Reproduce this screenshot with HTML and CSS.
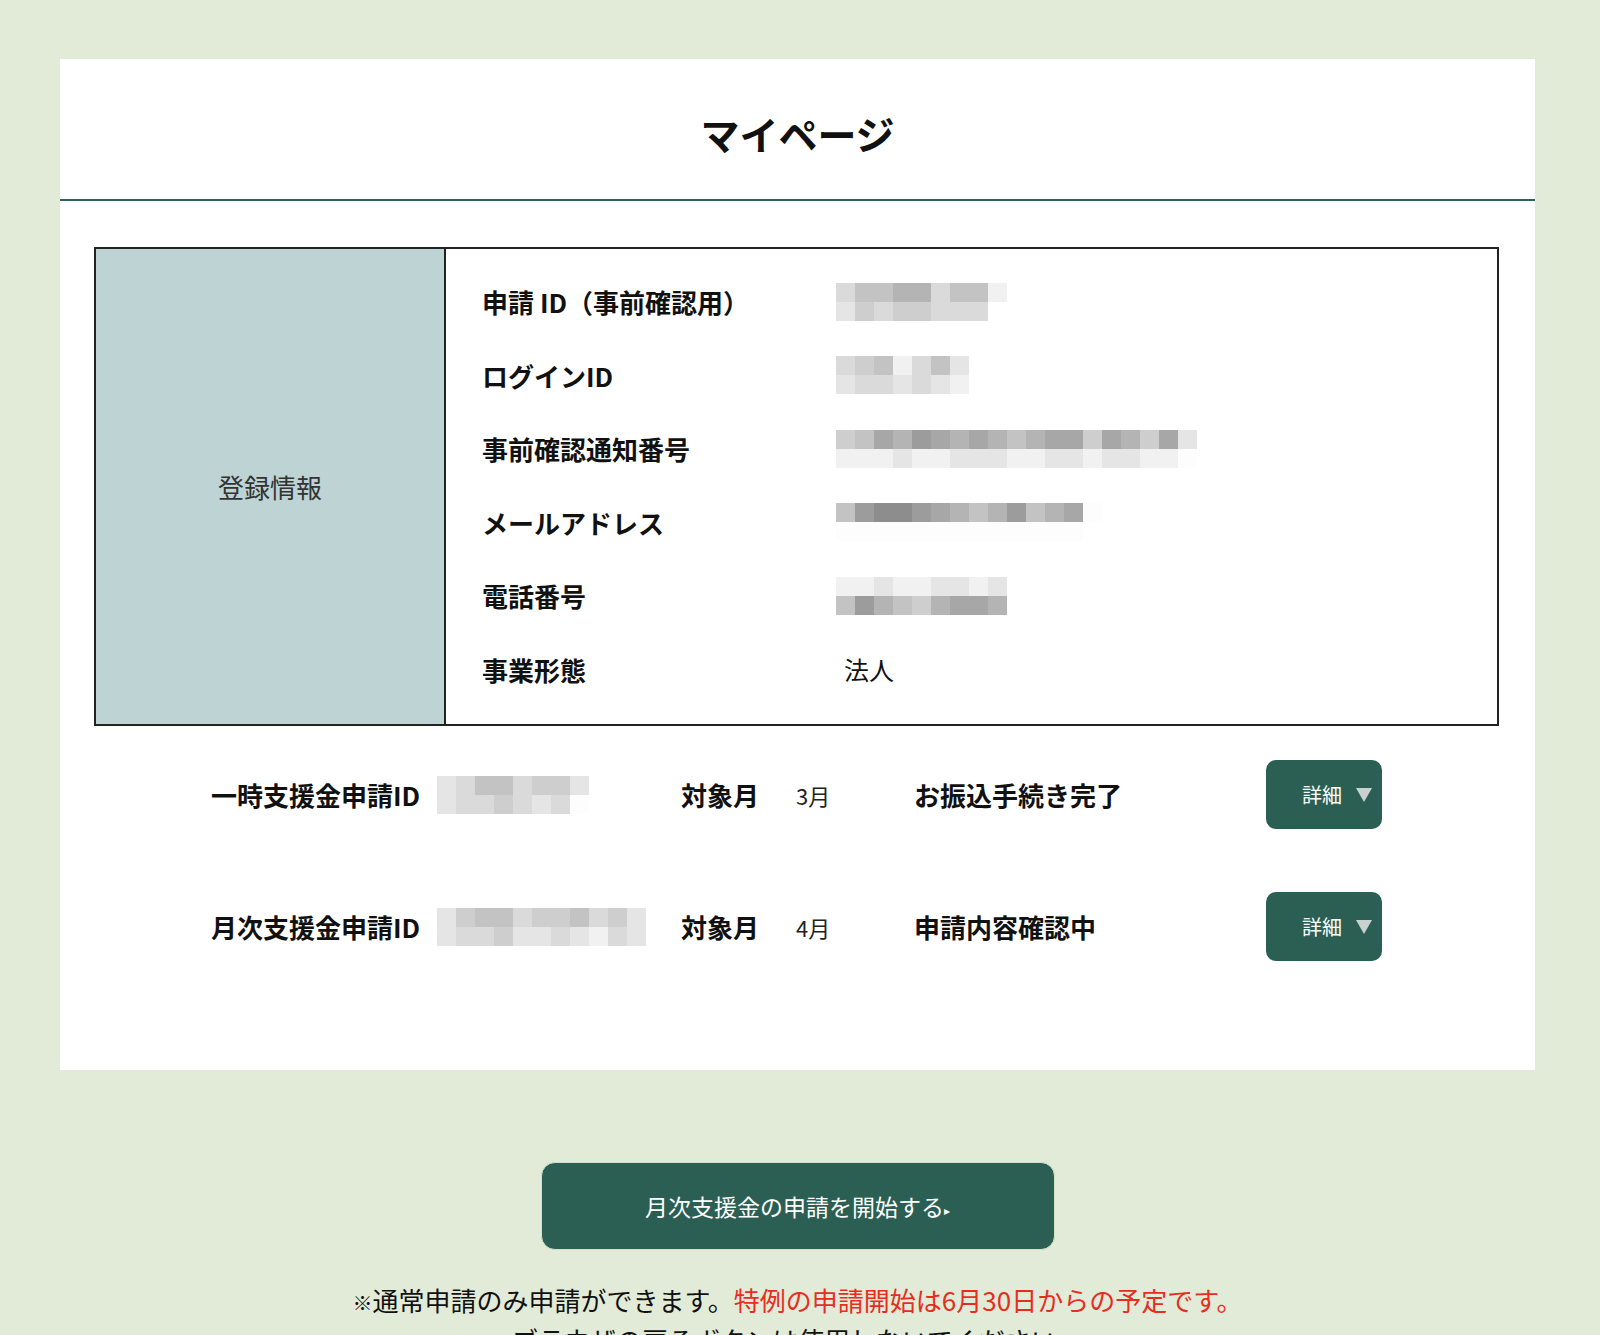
FILE: index.html
```html
<!DOCTYPE html>
<html lang="ja">
<head>
    <meta charset="UTF-8">
    <meta name="viewport" content="width=device-width, initial-scale=1.0">
    <title>マイページ</title>
    <link rel="stylesheet" href="styles.css">
</head>
<body>
    <div class="page">
        <div class="card">
            <div class="card-head">
                <h1>マイページ</h1>
            </div>
            <div class="card-body">
                <div class="info">
                    <div class="info-title">登録情報</div>
                    <dl class="info-list">
                        <div class="info-row">
                            <dt>申請 ID（事前確認用）</dt>
                            <dd>
                                <div class="mosaic">
                                    <div><span class="s3"></span><span class="s5"></span><span class="s5"></span><span class="s6"></span><span class="s6"></span><span class="s3"></span><span class="s5"></span><span class="s5"></span><span class="s1"></span></div>
                                    <div><span class="s2"></span><span class="s4"></span><span class="s3"></span><span class="s4"></span><span class="s4"></span><span class="s3"></span><span class="s3"></span><span class="s3"></span></div>
                                </div>
                            </dd>
                        </div>
                        <div class="info-row">
                            <dt>ログインID</dt>
                            <dd>
                                <div class="mosaic">
                                    <div><span class="s3"></span><span class="s4"></span><span class="s5"></span><span class="s1"></span><span class="s3"></span><span class="s5"></span><span class="s2"></span></div>
                                    <div><span class="s2"></span><span class="s3"></span><span class="s3"></span><span class="s2"></span><span class="s3"></span><span class="s2"></span><span class="s1"></span></div>
                                </div>
                            </dd>
                        </div>
                        <div class="info-row">
                            <dt>事前確認通知番号</dt>
                            <dd>
                                <div class="mosaic">
                                    <div><span class="s4"></span><span class="s5"></span><span class="s7"></span><span class="s6"></span><span class="s8"></span><span class="s7"></span><span class="s6"></span><span class="s7"></span><span class="s6"></span><span class="s5"></span><span class="s6"></span><span class="s7"></span><span class="s7"></span><span class="s4"></span><span class="s7"></span><span class="s6"></span><span class="s4"></span><span class="s7"></span><span class="s2"></span></div>
                                    <div><span class="s1"></span><span class="s1"></span><span class="s1"></span><span class="s2"></span><span class="s1"></span><span class="s1"></span><span class="s2"></span><span class="s2"></span><span class="s2"></span><span class="s1"></span><span class="s1"></span><span class="s2"></span><span class="s2"></span><span class="s1"></span><span class="s2"></span><span class="s2"></span><span class="s1"></span><span class="s1"></span><span class="s0"></span></div>
                                </div>
                            </dd>
                        </div>
                        <div class="info-row">
                            <dt>メールアドレス</dt>
                            <dd>
                                <div class="mosaic">
                                    <div><span class="s5"></span><span class="s8"></span><span class="s9"></span><span class="s9"></span><span class="s8"></span><span class="s7"></span><span class="s6"></span><span class="s5"></span><span class="s6"></span><span class="s8"></span><span class="s5"></span><span class="s6"></span><span class="s7"></span><span class="s0"></span></div>
                                    <div><span class="s0"></span><span class="s0"></span><span class="s0"></span><span class="s0"></span><span class="s0"></span><span class="s0"></span><span class="s0"></span><span class="s0"></span><span class="s0"></span><span class="s0"></span><span class="s0"></span><span class="s0"></span><span class="s0"></span></div>
                                </div>
                            </dd>
                        </div>
                        <div class="info-row">
                            <dt>電話番号</dt>
                            <dd>
                                <div class="mosaic">
                                    <div><span class="s1"></span><span class="s1"></span><span class="s2"></span><span class="s1"></span><span class="s1"></span><span class="s2"></span><span class="s2"></span><span class="s1"></span><span class="s2"></span></div>
                                    <div><span class="s5"></span><span class="s8"></span><span class="s6"></span><span class="s5"></span><span class="s4"></span><span class="s6"></span><span class="s7"></span><span class="s7"></span><span class="s6"></span></div>
                                </div>
                            </dd>
                        </div>
                        <div class="info-row">
                            <dt>事業形態</dt>
                            <dd class="plain">法人</dd>
                        </div>
                    </dl>
                </div>

                <div class="apps">
                    <div class="app-row">
                        <div class="app-label">一時支援金申請ID</div>
                        <div class="mosaic">
                            <div><span class="s2"></span><span class="s3"></span><span class="s5"></span><span class="s5"></span><span class="s3"></span><span class="s4"></span><span class="s4"></span><span class="s2"></span></div>
                            <div><span class="s2"></span><span class="s3"></span><span class="s3"></span><span class="s4"></span><span class="s3"></span><span class="s2"></span><span class="s3"></span><span class="s0"></span></div>
                        </div>
                        <div class="app-label">対象月</div>
                        <div class="app-month">3月</div>
                        <div class="app-label">お振込手続き完了</div>
                        <button class="detail">詳細<span class="tri"></span></button>
                    </div>
                    <div class="app-row">
                        <div class="app-label">月次支援金申請ID</div>
                        <div class="mosaic">
                            <div><span class="s2"></span><span class="s4"></span><span class="s5"></span><span class="s5"></span><span class="s3"></span><span class="s4"></span><span class="s4"></span><span class="s5"></span><span class="s3"></span><span class="s4"></span><span class="s2"></span></div>
                            <div><span class="s2"></span><span class="s3"></span><span class="s3"></span><span class="s4"></span><span class="s2"></span><span class="s2"></span><span class="s3"></span><span class="s2"></span><span class="s1"></span><span class="s3"></span><span class="s2"></span></div>
                        </div>
                        <div class="app-label">対象月</div>
                        <div class="app-month">4月</div>
                        <div class="app-label">申請内容確認中</div>
                        <button class="detail">詳細<span class="tri"></span></button>
                    </div>
                </div>
            </div>
        </div>

        <div class="start">
            <button class="start-btn">月次支援金の申請を開始する<span class="arrow">▸</span></button>
        </div>
        <p class="note"><span class="mark">※</span>通常申請のみ申請ができます。<span class="red">特例の申請開始は6月30日からの予定です。</span><br>ブラウザの戻るボタンは使用しないでください。</p>
    </div>
</body>
</html>
```

FILE: styles.css
```css
body {
    margin: 0;
    background-color: #e2ebd8;
    font-family: "Noto Sans CJK JP", "Noto Sans", sans-serif;
    color: #111;
}
.page {
    width: 1475px;
    margin-left: 60px;
    padding-top: 59px;
}
.card {
    background-color: #fff;
}
.card-head {
    padding: 51px 0 43px;
    border-bottom: 2px solid #2f6357;
    text-align: center;
}
.card-head h1 {
    margin: 0;
    font-size: 39px;
    line-height: 46px;
    font-weight: 700;
    color: #111;
}
.card-body {
    padding: 46px 36px 109px 34px;
}

/* registration info table */
.info {
    display: grid;
    grid-template-columns: 350px 1fr;
    border: 2px solid #222;
}
.info-title {
    display: flex;
    align-items: center;
    justify-content: center;
    background-color: #bdd3d4;
    border-right: 2px solid #222;
    font-size: 26px;
    color: #333;
}
.info-list {
    margin: 0;
    padding: 16px 0 18px 36px;
}
.info-row {
    display: grid;
    grid-template-columns: 354px 1fr;
    align-items: center;
    height: 73.5px;
}
.info-row dt {
    font-size: 26px;
    font-weight: 700;
}
.info-row dd {
    margin: 0;
}
.info-row dd.plain {
    padding-left: 8px;
    font-size: 25px;
}

/* pixelated (hidden) values */
.mosaic {
    display: flex;
    flex-direction: column;
}
.mosaic div {
    display: flex;
}
.mosaic span {
    width: 19px;
    height: 19px;
}
.s0 { background: #fdfdfd; }
.s1 { background: #f1f1f1; }
.s2 { background: #e5e5e5; }
.s3 { background: #dadada; }
.s4 { background: #cecece; }
.s5 { background: #c3c3c3; }
.s6 { background: #b4b4b4; }
.s7 { background: #a7a7a7; }
.s8 { background: #9c9c9c; }
.s9 { background: #8d8d8d; }

/* application rows */
.apps {
    display: flex;
    flex-direction: column;
    gap: 63px;
    margin-top: 34px;
    padding-left: 117px;
}
.app-row {
    display: grid;
    grid-template-columns: 226px 244px 115px 118px 352px 116px;
    align-items: center;
    height: 69px;
}
.app-label {
    font-size: 26px;
    font-weight: 700;
}
.app-month {
    font-size: 22px;
    color: #222;
}
.detail {
    display: flex;
    align-items: center;
    gap: 14px;
    width: 116px;
    height: 69px;
    padding: 0 0 0 36px;
    border: none;
    border-radius: 10px;
    background-color: #2c5f53;
    color: #fff;
    font-family: inherit;
    font-size: 20px;
    cursor: pointer;
}
.tri {
    width: 0;
    height: 0;
    border-left: 8px solid transparent;
    border-right: 8px solid transparent;
    border-top: 14px solid #c8d1cd;
}

/* bottom */
.start {
    display: flex;
    justify-content: center;
    margin-top: 92px;
}
.start-btn {
    width: 514px;
    height: 88px;
    border: 1px solid #d4e0c8;
    border-radius: 14px;
    background-color: #2c5f53;
    color: #fff;
    font-family: inherit;
    font-size: 23px;
    cursor: pointer;
}
.start-btn .arrow {
    font-size: 12px;
    vertical-align: middle;
}
.note {
    margin: 31px 0 0;
    text-align: center;
    font-size: 26px;
    line-height: 37px;
    color: #111;
}
.note .mark {
    font-size: 20px;
    font-weight: 700;
}
.red {
    color: #e62e1e;
}
```
